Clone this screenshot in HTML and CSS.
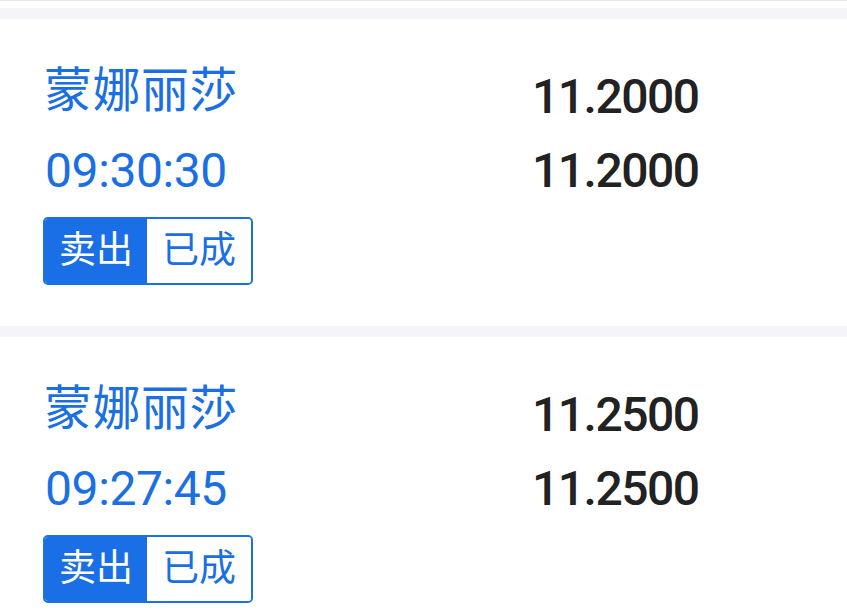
FILE: index.html
```html
<!DOCTYPE html>
<html lang="zh-CN">
<head>
    <meta charset="UTF-8">
    <meta name="viewport" content="width=device-width, initial-scale=1.0">
    <title>委托记录</title>
    <link rel="stylesheet" href="styles.css">
</head>
<body>
    <div class="top-strip"></div>

    <div class="order-list">
        <div class="order">
            <div class="order-left">
                <div class="stock-name">蒙娜丽莎</div>
                <div class="order-time">09:30:30</div>
                <div class="tag">
                    <span class="tag-side">卖出</span>
                    <span class="tag-status">已成</span>
                </div>
            </div>
            <div class="order-right">
                <div class="price">11.2000</div>
                <div class="price">11.2000</div>
            </div>
        </div>

        <div class="order">
            <div class="order-left">
                <div class="stock-name">蒙娜丽莎</div>
                <div class="order-time">09:27:45</div>
                <div class="tag">
                    <span class="tag-side">卖出</span>
                    <span class="tag-status">已成</span>
                </div>
            </div>
            <div class="order-right">
                <div class="price">11.2500</div>
                <div class="price">11.2500</div>
            </div>
        </div>
    </div>
</body>
</html>
```

FILE: styles.css
```css
body {
    margin: 0;
    padding: 0;
    background-color: #fff;
    font-family: Roboto, "Noto Sans CJK SC", sans-serif;
    overflow: hidden;
}

.top-strip {
    height: 7px;
    border-top: 1px solid #e6e6e6;
    background-color: #fff;
}

.order {
    display: grid;
    grid-template-columns: 489px 1fr;
    padding: 40px 0 41px 43px;
    border-top: 11px solid #f4f5f9;
    background-color: #fff;
}

.stock-name {
    font-size: 48px;
    line-height: 64px;
    color: #1a6fe3;
    padding-left: 1px;
    letter-spacing: 0.5px;
}

.order-time {
    font-size: 48px;
    line-height: 64px;
    color: #1a6fe3;
    margin-top: 16px;
    padding-left: 2px;
    letter-spacing: -0.4px;
}

.tag {
    display: inline-flex;
    margin-top: 14px;
    border: 2px solid #1a72dc;
    border-radius: 5px;
    overflow: hidden;
    font-size: 37px;
    line-height: 64px;
}

.tag-side {
    padding: 0 14px;
    background-color: #1a6fe6;
    color: #fff;
}

.tag-status {
    padding: 0 15px;
    color: #1a6fe3;
    background-color: #fff;
}

.order-right {
    padding-top: 1px;
}

.price {
    font-size: 48px;
    font-weight: 500;
    line-height: 74px;
    letter-spacing: -1.5px;
    color: #222;
}
```
